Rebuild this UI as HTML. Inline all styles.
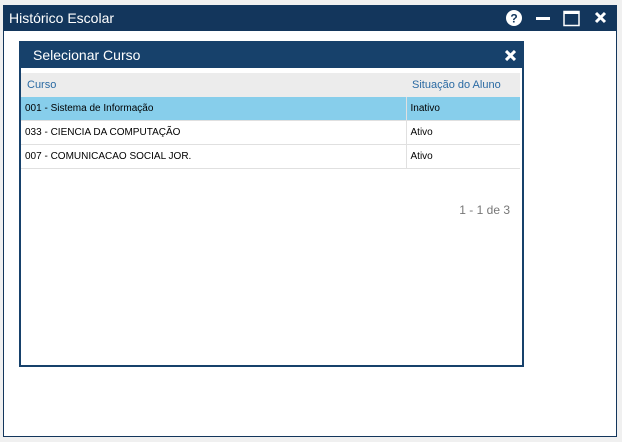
<!DOCTYPE html>
<html><head><meta charset="utf-8"><style>
body{margin:0;width:622px;height:442px;background:#f0f0f0;font-family:"Liberation Sans",sans-serif;position:relative;overflow:hidden}
.win{position:absolute;left:3px;top:5px;width:612px;height:430px;background:#fff;border:1px solid #13365c}
.tb{position:absolute;left:0;top:0;right:0;height:25px;background:#13365c;color:#fff;font-size:14px;line-height:25px;padding-left:5px}
.dlg{position:absolute;left:15px;top:35px;width:501px;height:322px;border:2px solid #17416b;background:#fff}
.dt{height:25px;background:#17416b;color:#fff;font-size:14px;line-height:25px;padding-left:12px;position:relative}
table{position:absolute;left:0;top:30px;width:499px;border-collapse:collapse;font-size:10px}
td{height:23px;padding:0 4px;border-bottom:1px solid #e0e0e0}
td.c2{border-left:1px solid #e0e0e0;width:106px}
th{background:#ececec;color:#2a6aa3;font-weight:normal;text-align:left;height:24px;padding:0 6px;font-size:11px}
.sel td{background:#87ceeb}
.pg{position:absolute;right:12px;top:160px;color:#777;font-size:12px}
</style></head><body>
<div class="win">
<div class="tb">Histórico Escolar
<svg style="position:absolute;left:500px;top:4px" width="110" height="18">
<circle cx="10" cy="8" r="8" fill="#fff"/><text x="10" y="12.5" font-size="12" font-weight="bold" fill="#13365c" text-anchor="middle" font-family="Liberation Sans">?</text>
<rect x="32" y="7" width="14" height="3" fill="#fff"/>
<rect x="60" y="1.5" width="15" height="14" fill="none" stroke="#fff" stroke-width="1.5"/><rect x="60" y="1" width="15" height="3" fill="#fff"/>
<path d="M92 3L101 12M101 3L92 12" stroke="#fff" stroke-width="3"/>
</svg></div>
<div class="dlg">
<div class="dt">Selecionar Curso<svg style="position:absolute;right:6px;top:7px" width="11" height="11"><path d="M1 1L10 10M10 1L1 10" stroke="#fff" stroke-width="3"/></svg></div>
<table>
<tr><th>Curso</th><th style="width:102px">Situação do Aluno</th></tr>
<tr class="sel"><td>001 - Sistema de Informação</td><td class="c2" style="width:102px">Inativo</td></tr>
<tr><td>033 - CIENCIA DA COMPUTAÇÃO</td><td class="c2" style="width:102px">Ativo</td></tr>
<tr><td>007 - COMUNICACAO SOCIAL JOR.</td><td class="c2" style="width:102px">Ativo</td></tr>
</table>
<div class="pg">1 - 1 de 3</div>
</div>
</div>
</body></html>
